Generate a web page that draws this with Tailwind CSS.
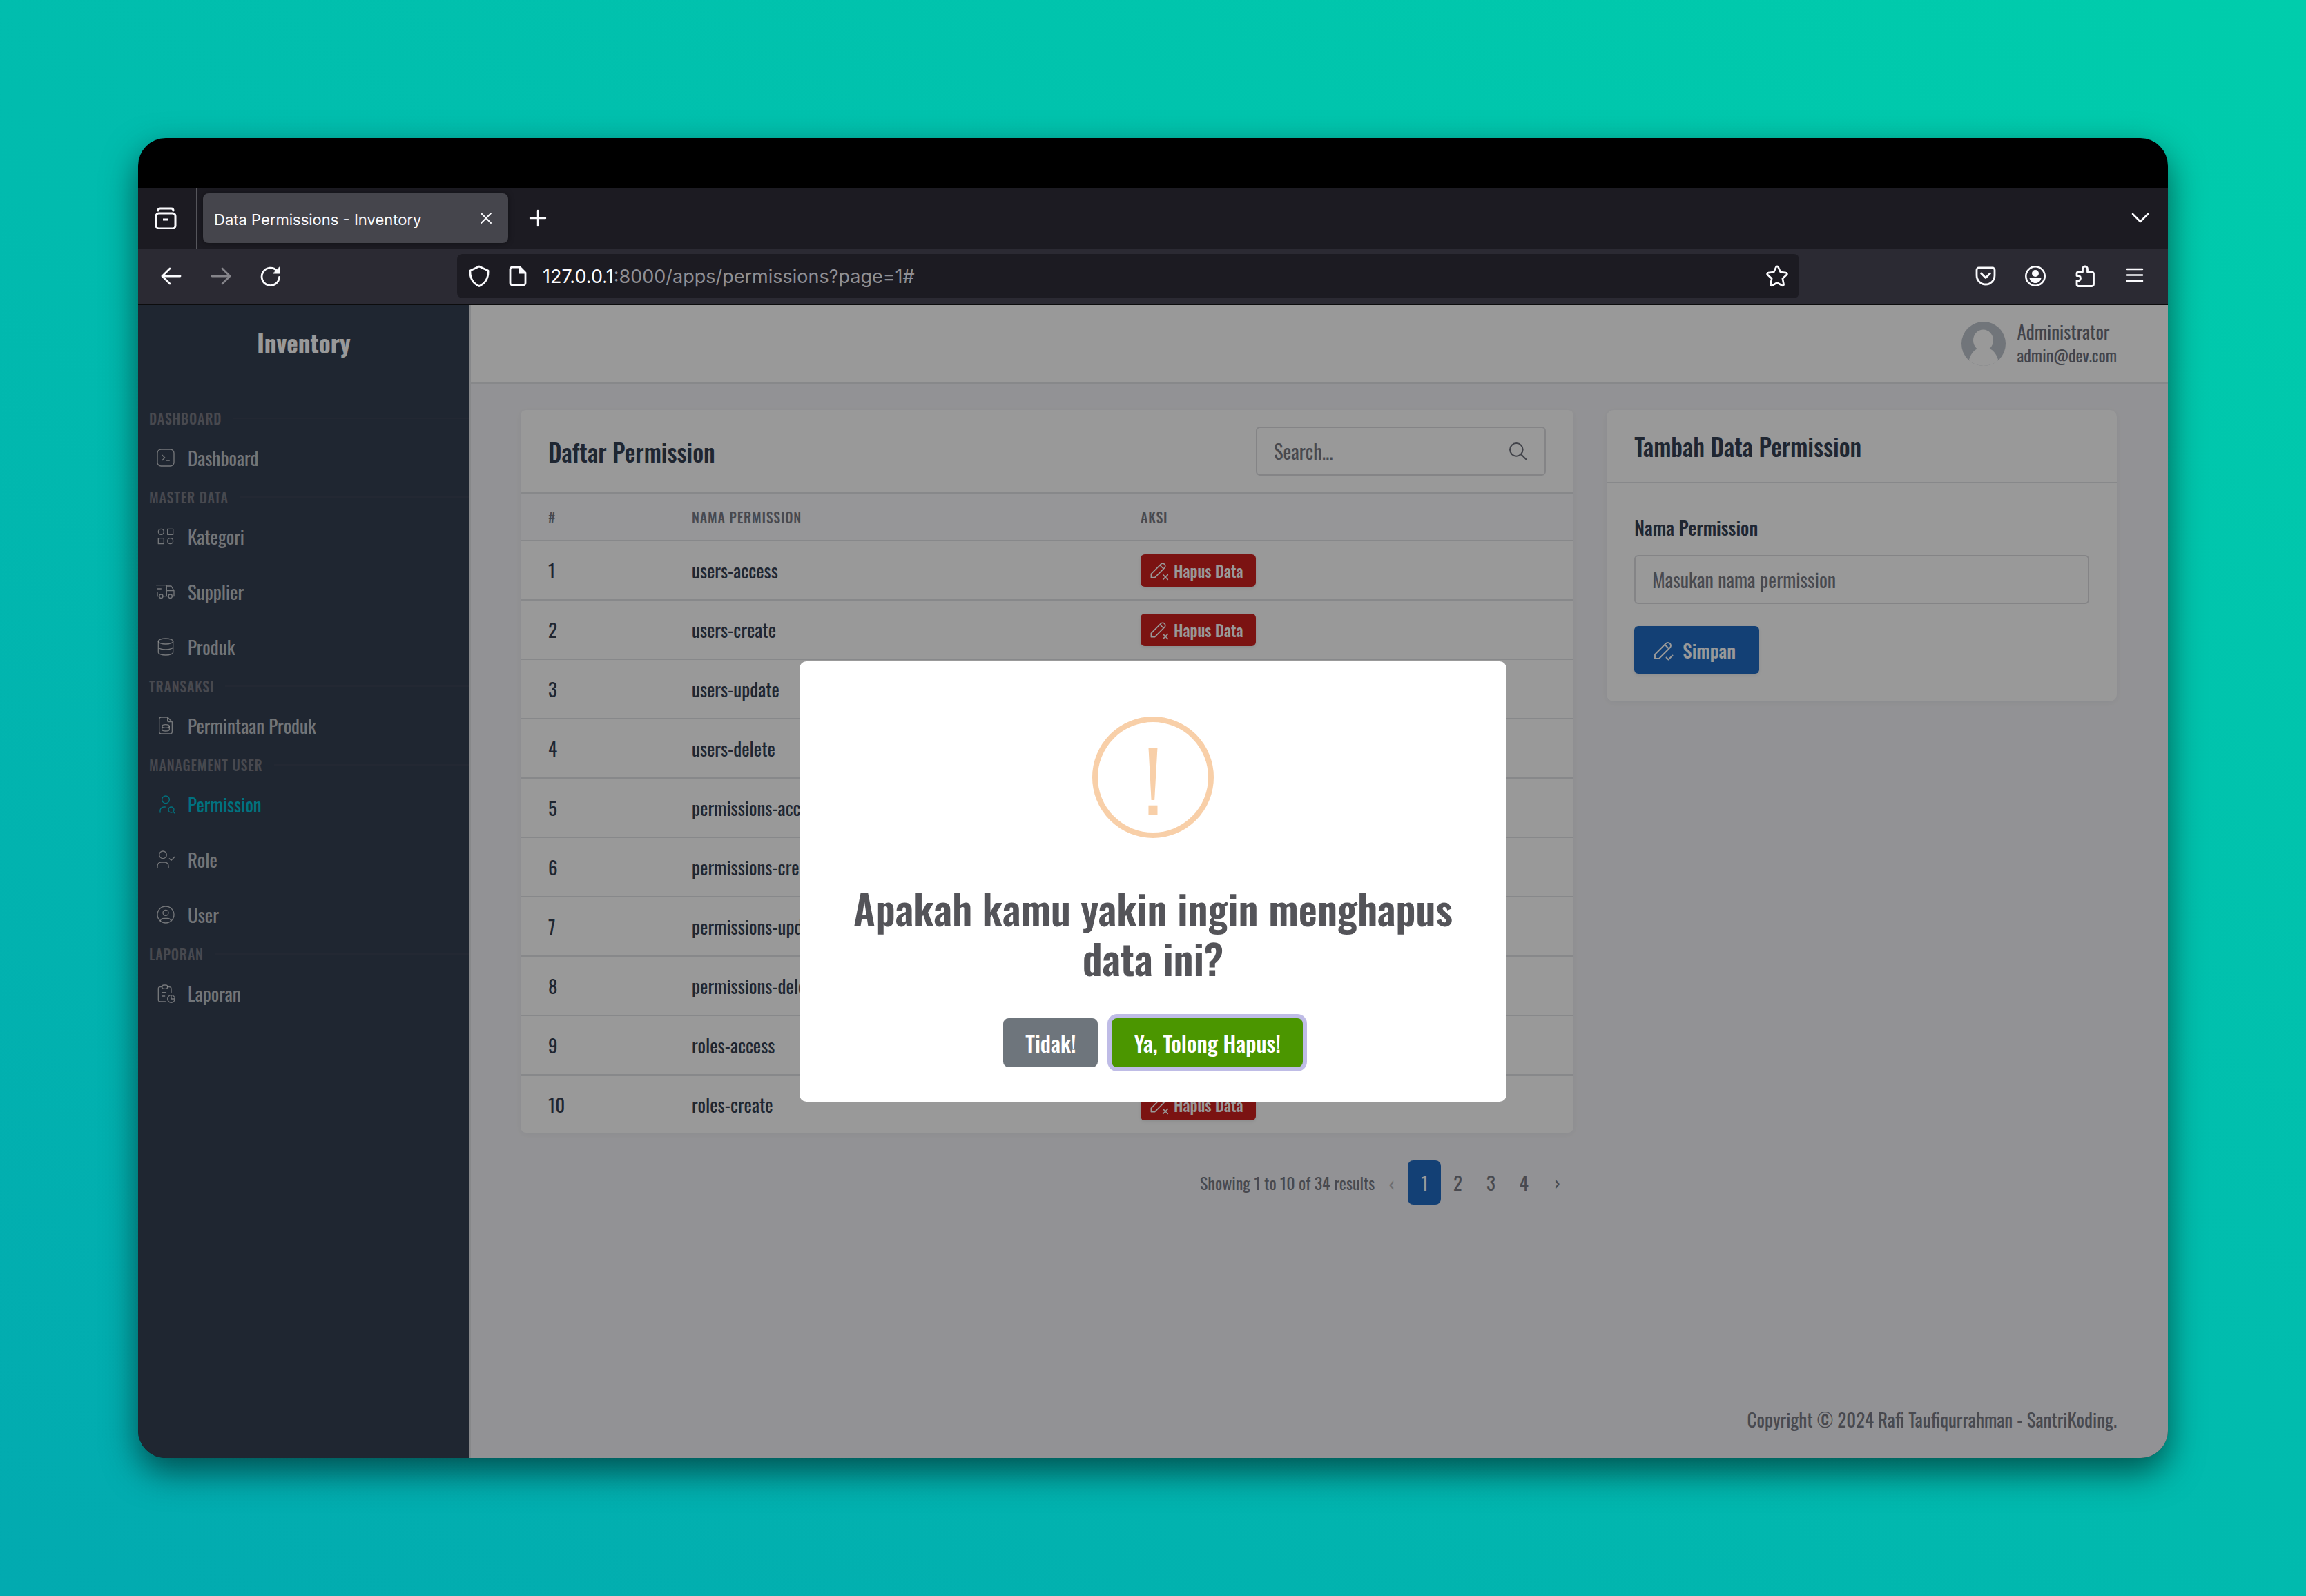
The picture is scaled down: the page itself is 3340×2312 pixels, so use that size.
<!DOCTYPE html>
<html lang="id">
<head>
<meta charset="utf-8">
<title>Data Permissions - Inventory</title>
<script src="https://cdn.jsdelivr.net/npm/@tailwindcss/browser@4"></script>
</head>
<body class="flex min-h-screen bg-linear-[30deg,#02aab0,#00cdac] p-[200px] font-['Oswald','Roboto_Condensed',sans-serif] text-[27px] leading-10 text-[#354052]">

<svg class="hidden" aria-hidden="true">
  <symbol id="i-terminal" viewBox="0 0 24 24"><rect x="3" y="3" width="18" height="18" rx="4"/><path d="M8 9l3 3l-3 3M13 15h3"/></symbol>
  <symbol id="i-category" viewBox="0 0 24 24"><path d="M14 4h6v6h-6zM4 14h6v6h-6z"/><circle cx="17" cy="17" r="3"/><circle cx="7" cy="7" r="3"/></symbol>
  <symbol id="i-truck" viewBox="0 0 24 24"><circle cx="7" cy="17" r="2"/><circle cx="17" cy="17" r="2"/><path d="M5 17h-2v-4m-1 -8h11v12m-4 0h6m4 0h2v-6h-8m0 -5h5l3 5M3 9h4"/></symbol>
  <symbol id="i-database" viewBox="0 0 24 24"><ellipse cx="12" cy="6" rx="8" ry="3"/><path d="M4 6v6a8 3 0 0 0 16 0v-6M4 12v6a8 3 0 0 0 16 0v-6"/></symbol>
  <symbol id="i-file" viewBox="0 0 24 24"><ellipse cx="12" cy="12.75" rx="4" ry="1.75"/><path d="M8 12.5v3.75c0 .966 1.79 1.75 4 1.75s4 -.784 4 -1.75v-3.75M14 3v4a1 1 0 0 0 1 1h4M17 21h-10a2 2 0 0 1 -2 -2v-14a2 2 0 0 1 2 -2h7l5 5v11a2 2 0 0 1 -2 2z"/></symbol>
  <symbol id="i-user-search" viewBox="0 0 24 24"><circle cx="12" cy="7" r="4"/><path d="M6 21v-2a4 4 0 0 1 4 -4h1.5"/><circle cx="18" cy="18" r="3"/><path d="M20.2 20.2l1.8 1.8"/></symbol>
  <symbol id="i-user-check" viewBox="0 0 24 24"><circle cx="9" cy="7" r="4"/><path d="M3 21v-2a4 4 0 0 1 4 -4h4a4 4 0 0 1 4 4v2M16 11l2 2l4 -4"/></symbol>
  <symbol id="i-user-circle" viewBox="0 0 24 24"><circle cx="12" cy="12" r="9"/><circle cx="12" cy="10" r="3"/><path d="M6.168 18.849a4 4 0 0 1 3.832 -2.849h4a4 4 0 0 1 3.834 2.855"/></symbol>
  <symbol id="i-report" viewBox="0 0 24 24"><path d="M8 5h-2a2 2 0 0 0 -2 2v12a2 2 0 0 0 2 2h5.697M18 14v4h4M18 11v-4a2 2 0 0 0 -2 -2h-2M8 11h4M8 15h3"/><rect x="8" y="3" width="6" height="4" rx="2"/><circle cx="18" cy="18" r="4"/></symbol>
  <symbol id="i-search" viewBox="0 0 24 24"><circle cx="10" cy="10" r="7"/><path d="M21 21l-6 -6"/></symbol>
  <symbol id="i-pencil-x" viewBox="0 0 24 24"><path d="M4 20h4l10.5 -10.5a2.828 2.828 0 1 0 -4 -4l-10.5 10.5v4M13.5 6.5l4 4M22 22l-5 -5M17 22l5 -5"/></symbol>
  <symbol id="i-pencil-check" viewBox="0 0 24 24"><path d="M4 20h4l10.5 -10.5a2.828 2.828 0 1 0 -4 -4l-10.5 10.5v4M13.5 6.5l4 4M15 19l2 2l4 -4"/></symbol>
</svg>

<div class="flex flex-1 flex-col overflow-hidden rounded-[40px] bg-black shadow-[0_20px_50px_rgba(0,0,0,0.55)]">
  <div class="h-[72px]"></div>

  <!-- tab strip -->
  <div class="flex h-[88px] items-center bg-[#1c1b22] pr-[24px] font-['Inter',sans-serif] text-[#fbfbfe]">
    <button class="flex h-full w-[86px] items-center border-r-2 border-[#56565c] pl-[24px]" aria-label="Firefox View">
      <svg class="size-8" viewBox="0 0 32 32" fill="none" stroke="currentColor" stroke-width="3"><path d="M5 5c0-2 1-3 3-3h16c2 0 3 1 3 3" stroke-linecap="round"/><rect x="2" y="9" width="28" height="22" rx="4"/><path d="M12 18h8" /></svg>
    </button>
    <div class="ml-2 flex h-[72px] w-[442px] items-center justify-between rounded-lg bg-[#45454c] pl-4 pr-[22px] shadow-[0_0_8px_rgba(0,0,0,0.4)]">
      <span class="pt-[3px] text-[22px] leading-8">Data Permissions - Inventory</span>
      <button aria-label="Tutup tab"><svg class="size-5" viewBox="0 0 20 20" fill="none" stroke="currentColor" stroke-width="2" stroke-linecap="round"><path d="M3 3l14 14M17 3L3 17"/></svg></button>
    </div>
    <button class="ml-[30px]" aria-label="Tab baru"><svg class="size-[26px]" viewBox="0 0 26 26" fill="none" stroke="currentColor" stroke-width="2.4" stroke-linecap="round"><path d="M13 2v22M2 13h22"/></svg></button>
    <button class="ml-auto" aria-label="Daftar tab"><svg class="size-8" viewBox="0 0 32 32" fill="none" stroke="currentColor" stroke-width="2.6" stroke-linecap="round" stroke-linejoin="round"><path d="M5 10l11 11l11-11"/></svg></button>
  </div>

  <!-- toolbar -->
  <div class="flex h-[82px] items-center border-b-2 border-[#0c0c0d] bg-[#2b2a33] pl-8 pr-8 font-['Inter',sans-serif] text-[#fbfbfe]">
    <div class="flex w-[430px] items-center gap-10">
      <button aria-label="Kembali"><svg class="size-8" viewBox="0 0 32 32" fill="none" stroke="currentColor" stroke-width="2.8" stroke-linecap="round" stroke-linejoin="round"><path d="M29 16H3M14 5L3 16l11 11"/></svg></button>
      <button class="text-[#85848a]" aria-label="Maju"><svg class="size-8" viewBox="0 0 32 32" fill="none" stroke="currentColor" stroke-width="2.8" stroke-linecap="round" stroke-linejoin="round"><path d="M3 16h26M18 5l11 11l-11 11"/></svg></button>
      <button aria-label="Muat ulang"><svg class="size-8" viewBox="0 0 32 32" fill="none" stroke="currentColor" stroke-width="2.8" stroke-linecap="round"><path d="M28.5 17.5A12.7 12.7 0 1 1 25 8"/><path d="M29 3v9h-9z" fill="currentColor" stroke-width="1" stroke-linejoin="round"/></svg></button>
    </div>
    <div class="mr-[254px] flex h-16 flex-1 items-center rounded-lg bg-[#1c1b22] px-4">
      <svg class="size-8" viewBox="0 0 32 32" fill="none" stroke="currentColor" stroke-width="2.8" stroke-linejoin="round"><path d="M16 2l13 6c.5 10-3 18-13 22.5C6 26 2.5 18 3 8z"/></svg>
      <svg class="ml-6 size-8" viewBox="0 0 32 32" fill="none" stroke="currentColor" stroke-width="2.8" stroke-linejoin="round"><path d="M19 3H8a3 3 0 0 0-3 3v20a3 3 0 0 0 3 3h16a3 3 0 0 0 3-3V11z"/><path d="M18 3v9h9z" fill="currentColor" stroke-width="1"/></svg>
      <span class="ml-[20px] pt-[2px] text-[27px] leading-8 text-[#8f8f94]"><span class="text-[#fbfbfe]">127.0.0.1</span>:8000/apps/permissions?page=1#</span>
      <button class="ml-auto" aria-label="Tandai halaman"><svg class="size-8" viewBox="0 0 32 32" fill="none" stroke="currentColor" stroke-width="2.7" stroke-linejoin="round"><path d="M14.5 2.8a1.7 1.7 0 0 1 3 0l3.4 7.4l8 1a1.6 1.6 0 0 1 .9 2.8l-5.900 5.600l1.600 8.200a1.600 1.600 0 0 1-2.400 1.700L16 25.500l-7.100 4a1.600 1.600 0 0 1-2.400-1.700l1.600-8.200L2.200 14a1.600 1.600 0 0 1 .9-2.800l8-1z"/></svg></button>
    </div>
    <div class="flex items-center gap-10">
      <button aria-label="Pocket"><svg class="size-8" viewBox="0 0 32 32" fill="none" stroke="currentColor" stroke-width="2.8" stroke-linecap="round" stroke-linejoin="round"><path d="M6 4h20a3 3 0 0 1 3 3v8a13 13 0 0 1-26 0V7a3 3 0 0 1 3-3z"/><path d="M9.5 12l6.5 6.5l6.5-6.5"/></svg></button>
      <button aria-label="Akun"><svg class="size-8" viewBox="0 0 32 32" fill="none" stroke="currentColor" stroke-width="2.6"><circle cx="16" cy="16" r="13.7"/><circle cx="16" cy="12" r="5" fill="currentColor" stroke="none"/><path d="M7.5 19h17c-1 4.5-4.5 7-8.5 7s-7.5-2.5-8.5-7z" fill="currentColor" stroke="none"/></svg></button>
      <button aria-label="Ekstensi"><svg class="size-8" viewBox="0 0 32 32" fill="none" stroke="currentColor" stroke-width="2.8" stroke-linejoin="round"><path d="M12.5 10V5.500a3.500 3.500 0 0 1 7 0V10H26a2.500 2.500 0 0 1 2.500 2.500V28a2.500 2.500 0 0 1-2.500 2.500H6.500A2.500 2.500 0 0 1 4 28v-5.500h3.500a4 4 0 0 0 0-7H4v-3A2.500 2.500 0 0 1 6.500 10z"/></svg></button>
      <button aria-label="Menu"><svg class="size-8" viewBox="0 0 32 32" fill="none" stroke="currentColor" stroke-width="2.6" stroke-linecap="round"><path d="M5 6h22M5 14.5h22M5 23h22"/></svg></button>
    </div>
  </div>

  <!-- page -->
  <div class="relative flex flex-1">
    <aside class="w-[480px] bg-[#354052] text-white/70">
      <h1 class="flex h-[108px] items-center justify-center text-[35px] font-bold text-white">Inventory</h1>
      <nav id="nav" class="pt-[39px]"></nav>
    </aside>

    <main class="flex flex-1 flex-col border-l-2 border-[#e2e3e6] bg-[#f4f4f8]">
      <header class="flex h-[114px] items-center justify-end gap-4 border-b-2 border-[#e2e3e6] bg-white pr-[74px] text-[#6e717c]">
        <svg class="size-16 rounded-full bg-[#bdc3cb]" viewBox="0 0 64 64" fill="#fff" role="img" aria-label="Avatar"><ellipse cx="31.5" cy="27" rx="14.5" ry="15.5"/><path d="M9 64c2-15 9-25 17-25h12c8 0 15 10 17 25z"/></svg>
        <div>
          <div class="leading-8">Administrator</div>
          <div class="text-[24px] leading-9">admin@dev.com</div>
        </div>
      </header>

      <div class="grid grid-cols-3 items-start gap-12 pt-[38px] pr-[74px] pl-[72px]">
        <section class="col-span-2">
          <div class="overflow-hidden rounded-lg bg-white shadow-[0_2px_8px_rgba(53,64,82,0.06)]">
            <div class="flex h-[121px] items-center justify-between border-b-2 border-[#e2e3e6] px-10">
              <h2 class="text-[35px] font-medium">Daftar Permission</h2>
              <label class="flex h-[71px] w-[420px] items-center rounded-[6px] border-2 border-[#dcdde0] pr-[22px] pl-[24px] text-[#6e717c]">
                <input type="search" placeholder="Search..." aria-label="Search" class="min-w-0 flex-1 bg-transparent text-[28px] outline-none placeholder:text-[#787a84]">
                <svg class="size-8" fill="none" stroke="currentColor" stroke-width="1.500" stroke-linecap="round" stroke-linejoin="round"><use href="#i-search"/></svg>
              </label>
            </div>
            <table class="w-full text-left">
              <thead>
                <tr class="h-[68px] border-b-2 border-[#e2e3e6] bg-[#fbfbfd] text-[20px] tracking-[0.04em] text-[#787a84]">
                  <th class="w-[230px] pl-10 font-medium">#</th>
                  <th class="w-[650px] pl-[18px] font-medium">NAMA PERMISSION</th>
                  <th class="pl-[18px] font-medium">AKSI</th>
                </tr>
              </thead>
              <tbody id="rows"></tbody>
            </table>
          </div>
          <nav class="mt-10 flex h-16 items-center justify-end text-[#787a84]" aria-label="Halaman">
            <span class="text-[24px]">Showing 1 to 10 of 34 results</span>
            <span class="w-12 text-center opacity-50">‹</span>
            <a href="#" aria-current="page" class="flex h-16 w-12 items-center justify-center rounded-lg bg-[#206bc4] text-white">1</a>
            <a href="#" class="w-12 text-center">2</a>
            <a href="#" class="w-12 text-center">3</a>
            <a href="#" class="w-12 text-center">4</a>
            <a href="#" class="w-12 text-center">›</a>
          </nav>
        </section>

        <section class="rounded-[10px] bg-white shadow-[0_2px_8px_rgba(53,64,82,0.06)]">
          <div class="flex h-[106px] items-center border-b-2 border-[#e2e3e6] px-10">
            <h2 class="text-[35px] font-medium">Tambah Data Permission</h2>
          </div>
          <form class="p-10">
            <label for="nama" class="mb-4 block leading-12 font-medium">Nama Permission</label>
            <input id="nama" type="text" placeholder="Masukan nama permission" class="mb-8 block h-[71px] w-full rounded-[6px] border-2 border-[#dcdde0] px-[24px] text-[28px] outline-none placeholder:text-[#787a84]">
            <button type="button" class="flex h-[69px] items-center gap-[10px] rounded-[6px] bg-[#206bc4] pr-[34px] pl-6 font-medium text-white shadow-[0_2px_4px_rgba(53,64,82,0.1)]">
              <svg class="size-9" fill="none" stroke="currentColor" stroke-width="1.300" stroke-linecap="round" stroke-linejoin="round"><use href="#i-pencil-check"/></svg>Simpan</button>
          </form>
        </section>
      </div>

      <footer class="mt-auto pr-[74px] pb-9 text-right text-[#787a84]">Copyright © 2024 Rafi Taufiqurrahman - SantriKoding.</footer>
    </main>

    <!-- confirmation dialog over the dimmed page -->
    <div class="absolute inset-0 flex items-center justify-center bg-black/40">
      <div role="alertdialog" aria-labelledby="dlg" class="flex h-[638px] w-[1024px] flex-col items-center rounded-[10px] bg-white pt-20">
        <div class="flex size-44 items-center justify-center rounded-full border-8 border-[#f8cfa8] text-[120px] leading-none text-[#f8cfa8]">!</div>
        <h2 id="dlg" class="mt-[66px] px-16 text-center text-[59px] leading-[72px] font-semibold text-[#545459]">Apakah kamu yakin ingin menghapus data ini?</h2>
        <div class="mt-[51px] flex gap-5 text-[32px] font-medium text-white">
          <button class="h-[71px] rounded-lg bg-[#6e757c] px-8">Tidak!</button>
          <button class="h-[71px] rounded-lg bg-[#4b9600] px-8 ring-6 ring-[#bfbce6]">Ya, Tolong Hapus!</button>
        </div>
      </div>
    </div>
  </div>
</div>

<script>
const menu = [
  ['Dashboard', [['Dashboard', 'terminal']]],
  ['Master Data', [['Kategori', 'category'], ['Supplier', 'truck'], ['Produk', 'database']]],
  ['Transaksi', [['Permintaan Produk', 'file']]],
  ['Management User', [['Permission', 'user-search', true], ['Role', 'user-check'], ['User', 'user-circle']]],
  ['Laporan', [['Laporan', 'report']]],
];
document.getElementById('nav').innerHTML = menu.map(([title, items]) => `
  <div class="flex h-[34px] items-center gap-4 pl-4 text-[20px] font-medium uppercase tracking-[0.04em] text-[#787a84]"><span>${title}</span><span class="h-[2px] flex-1 bg-[#3b4455]"></span></div>
  ${items.map(([name, icon, on]) => `<a href="#" class="flex h-20 items-center gap-4 pl-6 ${on ? 'text-[#00bfd4]' : ''}"><svg class="size-8" fill="none" stroke="currentColor" stroke-width="1" stroke-linecap="round" stroke-linejoin="round"><use href="#i-${icon}"/></svg><span>${name}</span></a>`).join('')}`).join('');

const names = ['users-access', 'users-create', 'users-update', 'users-delete', 'permissions-access', 'permissions-create', 'permissions-update', 'permissions-delete', 'roles-access', 'roles-create'];
document.getElementById('rows').innerHTML = names.map((name, i) => `
  <tr class="h-[86px] border-b-2 border-[#e2e3e6] last:h-[84px] last:border-b-0">
    <td class="pl-10">${i + 1}</td>
    <td class="pl-[18px]">${name}</td>
    <td class="pl-[18px]"><button class="flex h-[47px] items-center gap-[6px] rounded-[6px] bg-[#cd201f] pr-[18px] pl-[10px] text-[23px] font-medium text-white shadow-[0_2px_4px_rgba(53,64,82,0.1)]"><svg class="size-8" fill="none" stroke="currentColor" stroke-width="1.200" stroke-linecap="round" stroke-linejoin="round"><use href="#i-pencil-x"/></svg><span class="pt-[2px]">Hapus Data</span></button></td>
  </tr>`).join('');
</script>
</body>
</html>
